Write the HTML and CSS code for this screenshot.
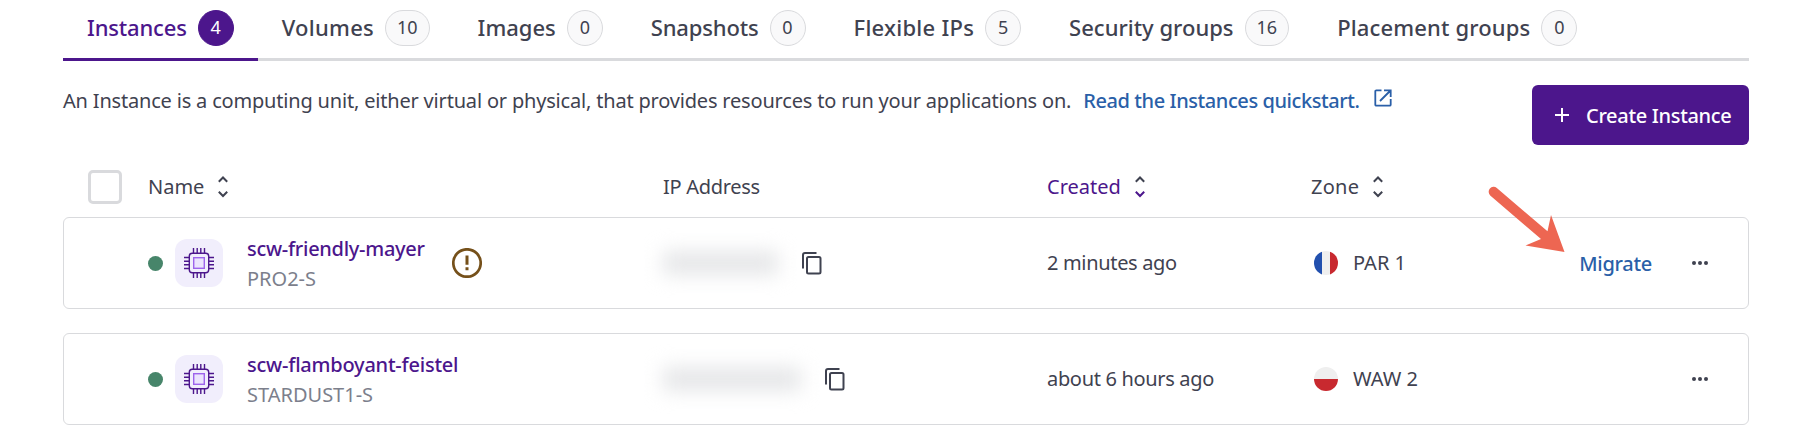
FILE: index.html
```
<!DOCTYPE html>
<html lang="en">
<head>
<meta charset="utf-8">
<title>Instances</title>
<link rel="stylesheet" href="styles.css">
</head>
<body>
<svg class="defs" width="0" height="0" aria-hidden="true">
  <symbol id="chip" viewBox="0 0 30 30">
    <g fill="none" stroke="#4c168c" stroke-width="1.4">
      <rect x="5.300" y="5.300" width="19.400" height="19.400" rx="3"/>
      <path d="M9.500 0v5M13.200 0v5M16.800 0v5M20.500 0v5M9.500 25v5M13.200 25v5M16.800 25v5M20.500 25v5M0 9.500h5M0 13.200h5M0 16.800h5M0 20.500h5M25 9.500h5M25 13.200h5M25 16.800h5M25 20.500h5"/>
    </g>
    <rect x="9.700" y="9.700" width="10.600" height="10.600" fill="#ebe3fd" stroke="#9d63ec" stroke-width="1.400"/>
  </symbol>
  <symbol id="copy" viewBox="0 0 20 23">
    <path d="M1 16.500V3a2 2 0 0 1 2-2h11.500" fill="none" stroke="#3f4250" stroke-width="2"/>
    <rect x="5" y="5" width="13.500" height="16.500" rx="1.500" fill="none" stroke="#3f4250" stroke-width="2"/>
  </symbol>
  <symbol id="dots" viewBox="0 0 16 4">
    <circle cx="2" cy="2" r="2"/><circle cx="8" cy="2" r="2"/><circle cx="14" cy="2" r="2"/>
  </symbol>
</svg>
<main class="page">
  <nav class="tabs">
    <a class="tab active"><span class="label snug">Instances</span><span class="badge">4</span></a>
    <a class="tab"><span class="label wide">Volumes</span><span class="badge">10</span></a>
    <a class="tab"><span class="label">Images</span><span class="badge">0</span></a>
    <a class="tab"><span class="label snug">Snapshots</span><span class="badge">0</span></a>
    <a class="tab"><span class="label wide">Flexible IPs</span><span class="badge">5</span></a>
    <a class="tab"><span class="label">Security groups</span><span class="badge">16</span></a>
    <a class="tab"><span class="label roomy">Placement groups</span><span class="badge">0</span></a>
  </nav>

  <section class="intro">
    <p class="lead"><span class="lead-text">An Instance is a computing unit, either virtual or physical, that provides resources to run your applications on.</span><a class="doc-link">Read the Instances quickstart.</a><svg class="external" width="18" height="18" viewBox="0 0 18 18" fill="none" stroke="#2a5fa8" stroke-width="1.800"><path d="M7.500 1.300H2.300a1 1 0 0 0-1 1v13.400a1 1 0 0 0 1 1h13.400a1 1 0 0 0 1-1V10M10 1.300h6.700V8M16.500 1.500 6 12"/></svg></p>
    <button class="create"><svg width="14" height="14" viewBox="0 0 14 14"><path d="M7 0v14M0 7h14" stroke="#fff" stroke-width="2"/></svg><span>Create Instance</span></button>
  </section>

  <section class="table">
    <div class="grid head">
      <div class="select"><span class="checkbox"></span></div>
      <div class="cell sortable">Name<svg class="sort" width="10" height="22" viewBox="0 0 10 22"><path d="M.8 5.700 5 1.500l4.200 4.200M.8 15.800 5 20l4.200-4.200"/></svg></div>
      <div class="cell tight">IP Address</div>
      <div class="cell sortable sorted">Created<svg class="sort" width="10" height="22" viewBox="0 0 10 22"><path d="M.8 5.700 5 1.500l4.200 4.200"/><path class="on" d="M.8 15.800 5 20l4.200-4.200"/></svg></div>
      <div class="cell sortable wide">Zone<svg class="sort" width="10" height="22" viewBox="0 0 10 22"><path d="M.8 5.700 5 1.500l4.200 4.200M.8 15.800 5 20l4.200-4.200"/></svg></div>
    </div>

    <article class="grid row">
      <div></div>
      <div class="cell name">
        <span class="status"></span>
        <span class="product"><svg width="30" height="30"><use href="#chip"/></svg></span>
        <div class="title"><a class="snugger">scw-friendly-mayer</a><span>PRO2-S</span></div>
        <svg class="warning" width="30" height="30" viewBox="0 0 30 30"><circle cx="15" cy="15" r="13.700" fill="none" stroke="#75501a" stroke-width="2.700"/><path d="M15 7.500v9.200M15 19.300v3" stroke="#75501a" stroke-width="3"/></svg>
      </div>
      <div class="cell ip"><span class="redacted first"></span><svg width="20" height="23"><use href="#copy"/></svg></div>
      <div class="cell tighter">2 minutes ago</div>
      <div class="cell zone"><svg width="24" height="24" viewBox="0 0 24 24"><clipPath id="disc"><circle cx="12" cy="12" r="12"/></clipPath><g clip-path="url(#disc)"><path fill="#2250ae" d="M0 0h8v24H0z"/><path fill="#efefef" d="M8 0h8v24H8z"/><path fill="#c8292f" d="M16 0h8v24h-8z"/></g></svg>PAR 1</div>
      <div class="actions"><a>Migrate</a><svg width="16" height="4"><use href="#dots"/></svg></div>
      <svg class="pointer" width="80" height="68" viewBox="0 0 80 68"><path fill="#ed6652" d="M3.200 13.400A5 5 0 0 1 9.800 5.900L60.500 49.300 64 33 77.500 70 38.500 63.500 54 57Z"/></svg>
    </article>

    <article class="grid row">
      <div></div>
      <div class="cell name">
        <span class="status"></span>
        <span class="product"><svg width="30" height="30"><use href="#chip"/></svg></span>
        <div class="title"><a>scw-flamboyant-feistel</a><span>STARDUST1-S</span></div>
      </div>
      <div class="cell ip"><span class="redacted second"></span><svg width="20" height="23"><use href="#copy"/></svg></div>
      <div class="cell tighter">about 6 hours ago</div>
      <div class="cell zone"><svg width="24" height="24" viewBox="0 0 24 24"><g clip-path="url(#disc)"><path fill="#efefef" d="M0 0h24v12H0z"/><path fill="#c8292f" d="M0 12h24v12H0z"/></g></svg>WAW 2</div>
      <div class="actions"><svg width="16" height="4"><use href="#dots"/></svg></div>
    </article>
  </section>
</main>
</body>
</html>
```
FILE: styles.css
```
* { box-sizing: border-box; }
body {
  margin: 0;
  background: #fff;
  color: #3f4250;
  font: 400 20px/30px "Noto Sans", "Open Sans", sans-serif;
}
svg { display: block; flex: none; }
.defs { position: absolute; }
.page { width: 1686px; margin-left: 63px; white-space: nowrap; }

.snug { letter-spacing: -.16px; }
.tight { letter-spacing: -.3px; }
.tighter { letter-spacing: -.33px; }
.roomy { letter-spacing: .15px; }
.wide { letter-spacing: .26px; }

.tabs { display: flex; height: 61px; box-shadow: inset 0 -3px #d9dadd; }
.tab {
  display: flex;
  align-items: flex-start;
  gap: 11px;
  padding: 10px 24px 0;
  font-size: 22px;
  font-weight: 500;
}
.tab .label { line-height: 35px; }
.tab.active { color: #4c168c; box-shadow: inset 0 -3px #4c168c; }
.badge {
  min-width: 36px;
  height: 36px;
  padding: 0 11px;
  border: 1px solid #d9dadd;
  border-radius: 18px;
  background: #f9f9fa;
  color: #3f4250;
  font-size: 18px;
  font-weight: 450;
  line-height: 33px;
  text-align: center;
}
.active .badge { background: #4c168c; border-color: #4c168c; color: #fff; }

.intro { display: flex; justify-content: space-between; padding-top: 24px; }
.lead { display: flex; margin: 1px 0 0; letter-spacing: -.185px; }
.doc-link { margin-left: 12px; color: #2a5fa8; font-weight: 500; letter-spacing: -.42px; }
.external { margin: 3px 0 0 14px; }
.create {
  display: flex;
  align-items: center;
  gap: 17px;
  width: 217px;
  height: 60px;
  padding: 0 0 0 23px;
  border: 0;
  border-radius: 6px;
  background: #4c168c;
  color: #fff;
  font: inherit;
  font-weight: 500;
  letter-spacing: -.32px;
}
.create span { padding-top: 1px; }

.grid {
  display: grid;
  grid-template-columns: 85px 515px 384px 264px 1fr auto;
  align-items: center;
}
.cell { display: flex; align-items: center; }
.head { height: 72px; padding-top: 11px; }
.head .cell { height: 30px; }
.select { padding-left: 25px; }
.checkbox {
  display: block;
  width: 34px;
  height: 34px;
  border: 3px solid #d9dadd;
  border-radius: 5px;
}
.sort { margin-left: 14px; fill: none; stroke: #3f4250; stroke-width: 2; }
.sorted { color: #4c168c; }
.sort .on { stroke: #4c168c; }

.row {
  position: relative;
  height: 92px;
  border: 1px solid #d9dadd;
  border-radius: 6px;
}
.row + .row { margin-top: 24px; }
.row > .cell { margin-left: -1px; }
.status { width: 15px; height: 15px; border-radius: 50%; background: #47856a; }
.product {
  display: grid;
  place-items: center;
  width: 48px;
  height: 48px;
  margin-left: 12px;
  border-radius: 12px;
  background: #f1eefc;
}
.title { display: flex; flex-direction: column; margin-left: 24px; padding-top: 2px; }
.title a { color: #4c168c; font-weight: 500; letter-spacing: -.22px; }
.title .snugger { letter-spacing: -.28px; }
.title span { color: #7c7f8c; }
.warning { margin-left: 27px; }

.redacted { height: 22px; background: #e3e4e6; filter: blur(10px); }
.redacted.first { width: 115px; margin-right: 24px; }
.redacted.second { width: 138px; margin-right: 24px; }
.zone svg { margin: 0 15px 0 3px; }
.actions { display: flex; align-items: center; gap: 40px; padding-right: 40px; }
.actions a { padding-top: 2px; color: #2a5fa8; font-weight: 500; letter-spacing: -.3px; }
.actions svg { fill: #3f4250; }

/* Call-out arrow pointing at the Migrate action */
.pointer { position: absolute; left: 1423px; top: -36px; overflow: visible; }
```
